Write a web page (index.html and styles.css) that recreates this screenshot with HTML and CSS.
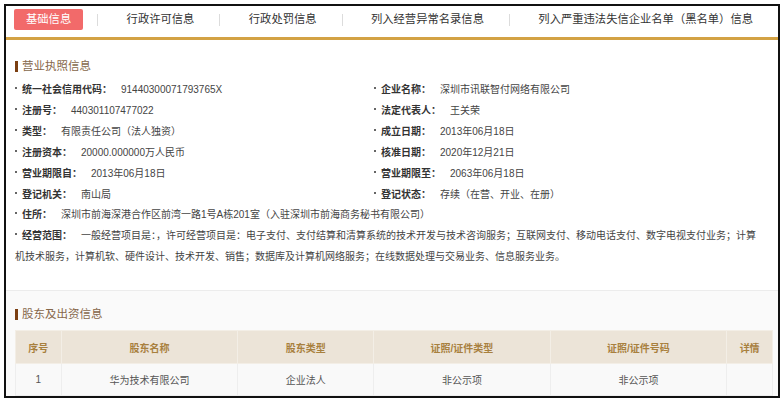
FILE: index.html
```html
<!DOCTYPE html>
<html>
<head>
    <title>企业信用信息 - 基础信息</title>
    <meta charset="utf-8">
    <link rel="stylesheet" href="styles.css">
</head>
<body>
    <div class="page">
        <div class="tabs">
            <a class="tab active">基础信息</a>
            <span class="sep"></span>
            <a class="tab">行政许可信息</a>
            <span class="sep"></span>
            <a class="tab">行政处罚信息</a>
            <span class="sep"></span>
            <a class="tab">列入经营异常名录信息</a>
            <span class="sep"></span>
            <a class="tab">列入严重违法失信企业名单（黑名单）信息</a>
        </div>

        <div class="section">
            <h3 class="section-title">营业执照信息</h3>
            <div class="info-grid">
                <div class="item"><span class="label">统一社会信用代码：</span>91440300071793765X</div>
                <div class="item"><span class="label">企业名称：</span>深圳市讯联智付网络有限公司</div>
                <div class="item"><span class="label">注册号：</span>440301107477022</div>
                <div class="item"><span class="label">法定代表人：</span>王关荣</div>
                <div class="item"><span class="label">类型：</span>有限责任公司（法人独资）</div>
                <div class="item"><span class="label">成立日期：</span>2013年06月18日</div>
                <div class="item"><span class="label">注册资本：</span>20000.000000万人民币</div>
                <div class="item"><span class="label">核准日期：</span>2020年12月21日</div>
                <div class="item"><span class="label">营业期限自：</span>2013年06月18日</div>
                <div class="item"><span class="label">营业期限至：</span>2063年06月18日</div>
                <div class="item"><span class="label">登记机关：</span>南山局</div>
                <div class="item"><span class="label">登记状态：</span>存续（在营、开业、在册）</div>
                <div class="item full"><span class="label">住所：</span>深圳市前海深港合作区前湾一路1号A栋201室（入驻深圳市前海商务秘书有限公司）</div>
                <div class="item full"><span class="label">经营范围：</span>一般经营项目是：，许可经营项目是：电子支付、支付结算和清算系统的技术开发与技术咨询服务；互联网支付、移动电话支付、数字电视支付业务；计算机技术服务，计算机软、硬件设计、技术开发、销售；数据库及计算机网络服务；在线数据处理与交易业务、信息服务业务。</div>
            </div>
        </div>

        <div class="section gray">
            <h3 class="section-title">股东及出资信息</h3>
            <table class="holders">
                <thead>
                    <tr>
                        <th class="narrow">序号</th>
                        <th class="wide">股东名称</th>
                        <th class="mid">股东类型</th>
                        <th class="wide">证照/证件类型</th>
                        <th class="wide">证照/证件号码</th>
                        <th class="narrow">详情</th>
                    </tr>
                </thead>
                <tbody>
                    <tr>
                        <td>1</td>
                        <td>华为技术有限公司</td>
                        <td>企业法人</td>
                        <td>非公示项</td>
                        <td>非公示项</td>
                        <td></td>
                    </tr>
                </tbody>
            </table>
        </div>
    </div>
</body>
</html>
```

FILE: styles.css
```css
body {
    margin: 0;
    padding: 0;
    background: white;
    font-family: "Liberation Sans", "Noto Sans CJK SC", sans-serif;
    color: #333;
}

.page {
    margin: 4px;
    height: 390px;
    border: 2px solid #111;
    background: white;
    overflow: hidden;
}

.tabs {
    display: flex;
    align-items: center;
    height: 21px;
    padding: 3px 0 7px 8px;
    border-bottom: 3px solid #d3a244;
    font-size: 11.3px;
}

.tab {
    padding: 0 25px 0 29px;
    line-height: 21px;
    color: #333;
    white-space: nowrap;
}

.tab.active {
    padding: 0 12px;
    margin-right: 14px;
    background: #f26a6a;
    border-radius: 2px;
    color: white;
}

.sep {
    width: 1px;
    height: 12px;
    background: #dcdcdc;
}

.section {
    padding: 19px 18px 0 9px;
    height: 231px;
}

.section.gray {
    height: 105px;
    padding: 16px 12px 0 9px;
    background: #fafafa;
    border-top: 1px solid #ececec;
}

.section-title {
    margin: 0 0 7px;
    height: 14px;
    line-height: 14px;
    font-size: 11.5px;
    font-weight: normal;
    color: #86674a;
    display: flex;
    align-items: center;
}

.section-title::before {
    content: "";
    width: 3px;
    height: 11px;
    margin-right: 4px;
    background: #7b3f12;
}

.info-grid {
    display: grid;
    grid-template-columns: 359px 1fr;
    font-size: 10px;
    line-height: 20.9px;
    color: #444;
}

.item::before {
    content: "";
    display: inline-block;
    width: 2px;
    height: 2px;
    margin: 7px 5px 0 0;
    vertical-align: top;
    background: #666;
}

.item.full {
    grid-column: 1 / 3;
}

.label {
    font-weight: bold;
    color: #333;
    margin-right: 9px;
}

.gray .section-title {
    margin-bottom: 9px;
}

.holders {
    width: 758px;
    border-collapse: collapse;
    font-size: 10px;
    text-align: center;
}

.holders th {
    height: 32px;
    padding: 0;
    background: #ece4d8;
    color: #a8803e;
    border: 1px solid #f3eee6;
}

.holders td {
    height: 31px;
    padding: 0;
    color: #555;
    background: #f9f9f9;
    border: 1px solid #eeeeee;
}

.holders .narrow {
    width: 45px;
}

.holders .wide {
    width: 177px;
}

.holders .mid {
    width: 136px;
}
```
